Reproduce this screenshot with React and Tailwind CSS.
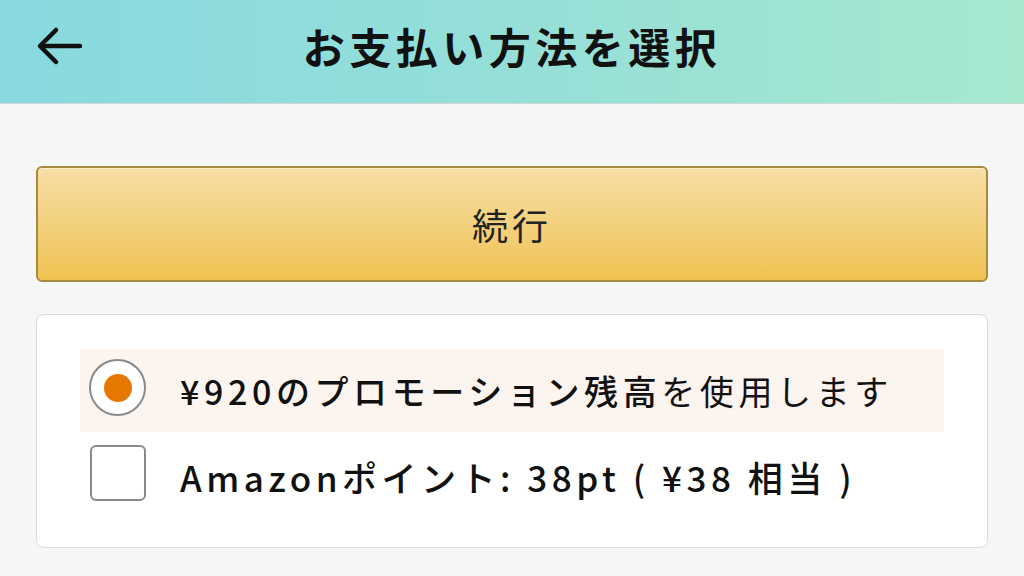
import React, { useState } from 'react';

const font = { fontFamily: '"Noto Sans CJK JP", "Noto Sans", sans-serif' };

const BackArrow = () => (
  <svg width="48" height="40" viewBox="0 0 48 40" fill="none" stroke="#111" strokeWidth="4.5" strokeLinecap="round" strokeLinejoin="round">
    <path d="M44 20H5" />
    <path d="M20 4L4 20l16 16" />
  </svg>
);

const App = () => {
  const [usePromo, setUsePromo] = useState(true);
  const [usePoints, setUsePoints] = useState(false);

  return (
    <div className="w-[1024px] h-[576px] bg-[#f6f6f6] flex flex-col overflow-hidden" style={font}>
      {/* header */}
      <header className="h-[104px] shrink-0 grid grid-cols-[1fr_auto_1fr] items-center pb-[12px] bg-gradient-to-r from-[#88d9df] via-[#95dfd8] to-[#a7e8cf] border-b border-[#cfd8d6]">
        <button className="justify-self-start ml-[36px] flex items-center">
          <BackArrow />
        </button>
        <h1 className="text-[42px] font-bold tracking-[4.5px] text-[#111] leading-none">お支払い方法を選択</h1>
        <div />
      </header>

      <main className="flex flex-col px-[36px] pt-[62px] gap-[32px]">
        <button className="h-[116px] w-full rounded-[6px] border-2 border-[#a88a3e] bg-gradient-to-b from-[#f7dfa6] to-[#efc24f] flex items-center justify-center shadow-[inset_0_1px_0_rgba(255,255,255,0.5)]">
          <span className="text-[36px] tracking-[4px] text-[#222] leading-none">続行</span>
        </button>

        <section className="h-[234px] bg-white border border-[#d9dcdc] rounded-[8px] px-[43px] pt-[34px]">
          <div
            className="h-[83px] bg-[#fcf4ee] flex items-center pl-[9px] cursor-pointer"
            onClick={() => setUsePromo(!usePromo)}
          >
            <span className="w-[57px] h-[57px] mb-[6px] rounded-full border-2 border-[#8a8a8a] bg-white flex items-center justify-center shrink-0">
              {usePromo && <span className="w-[28px] h-[28px] rounded-full bg-[#e47800]" />}
            </span>
            <p className="ml-[34px] text-[34px] tracking-[4.6px] text-[#111] leading-none">
              <span className="font-medium">¥920のプロモーション残高</span>を使用します
            </p>
          </div>

          <div
            className="h-[83px] flex items-start pl-[10px] pt-[13px] cursor-pointer"
            onClick={() => setUsePoints(!usePoints)}
          >
            <span className="w-[56px] h-[56px] rounded-[6px] border-2 border-[#8a8a8a] bg-white shrink-0" />
            <p className="ml-[34px] mt-[14px] text-[35px] tracking-[4.5px] text-[#111] font-medium leading-none">
              Amazonポイント: 38pt ( ¥38 相当 )
            </p>
          </div>
        </section>
      </main>
    </div>
  );
};

export default App;
